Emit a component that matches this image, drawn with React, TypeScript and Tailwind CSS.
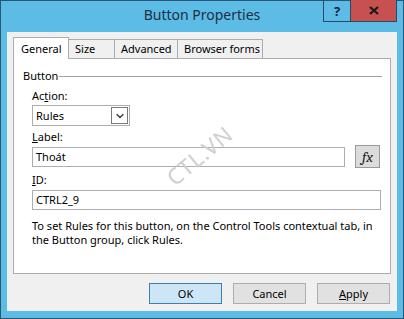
import { ChevronDown } from "lucide-react";

const font = { fontFamily: '"Segoe UI", "Noto Sans", "Open Sans", sans-serif' };

function Tab({ label, width, active }: { label: string; width: string; active?: boolean }) {
  if (active) {
    return (
      <div
        className={`relative z-10 -mb-px flex h-[22px] items-center border border-b-0 border-[#acacac] bg-white pl-[7px] text-black ${width}`}
      >
        {label}
      </div>
    );
  }
  return (
    <div
      className={`-ml-px flex h-[19px] items-center border border-b-0 border-[#acacac] bg-[#f0f0f0] pl-[6px] text-black ${width}`}
    >
      {label}
    </div>
  );
}

function Field({ value, className }: { value: string; className?: string }) {
  return (
    <div className={`flex h-[20px] items-center border border-[#abadb3] bg-white px-[3px] ${className ?? ""}`}>
      {value}
    </div>
  );
}

function DlgButton({ children, primary }: { children: React.ReactNode; primary?: boolean }) {
  return (
    <button
      className={`flex h-[21px] w-[73px] items-center justify-center border ${
        primary ? "border-[#3c7fb1] bg-[#cde6f7]" : "border-[#adadad] bg-[#e1e1e1]"
      } text-black`}
    >
      {children}
    </button>
  );
}

export default function App() {
  return (
    <div
      className="flex h-[319px] w-[404px] flex-col border border-[#2a5674] bg-[#5dbce5] text-[11px] leading-[16px] text-black"
      style={font}
    >
      {/* Title bar */}
      <div className="relative flex h-[31px] shrink-0 items-center justify-center">
        <span className="pb-[3px] text-[14px] text-[#1b2f45]">Button Properties</span>
        <div className="absolute right-[6px] top-[-1px] flex h-[22px] border border-[#2a4a63] border-t-0">
          <div className="flex w-[27px] items-center justify-center border-r border-[#2a4a63] text-[13px] font-bold text-[#10233a]">
            ?
          </div>
          <div className="flex w-[45px] items-center justify-center bg-[#c75050]">
            <svg width="10" height="9" viewBox="0 0 10 9">
              <path d="M1 1 L9 8 M9 1 L1 8" stroke="#1a1a1a" strokeWidth="2.2" />
            </svg>
          </div>
        </div>
      </div>

      {/* Client area */}
      <div className="mx-[6px] mb-[7px] flex flex-1 flex-col bg-[#f0f0f0] px-[6px] pt-[5px]">
        <div className="flex items-end">
          <Tab label="General" width="w-[56px]" active />
          <Tab label="Size" width="w-[47px]" />
          <Tab label="Advanced" width="w-[64px]" />
          <Tab label="Browser forms" width="w-[86px]" />
        </div>

        {/* Tab panel */}
        <div className="relative flex h-[216px] flex-col border border-[#acacac] bg-white pl-[9px] pr-[8px] pt-[9px]">
          <div className="flex items-center">
            <span>Button</span>
            <div className="ml-[1px] h-px flex-1 bg-[#a0a0a0]" />
          </div>

          <div className="ml-[9px] mt-[4px]">
            Ac<span className="underline">t</span>ion:
          </div>
          <div className="ml-[9px] mt-[1px] flex h-[21px] w-[98px] items-center justify-between border border-[#abadb3] bg-white pl-[3px] pr-px">
            <span>Rules</span>
            <div className="flex h-[17px] w-[17px] items-center justify-center border border-[#7a7a7a] bg-white">
              <ChevronDown size={12} strokeWidth={2.5} color="#333" />
            </div>
          </div>

          <div className="ml-[9px] mt-[3px]">
            <span className="underline">L</span>abel:
          </div>
          <div className="ml-[9px] mt-[2px] flex items-start gap-[10px]">
            <Field value="Thoát" className="w-[313px]" />
            <div className="-mt-[2px] flex h-[23px] w-[25px] items-center justify-center border border-[#9a9a9a] bg-[#dcdcdc] font-serif text-[15px] italic text-[#222]">
              fx
            </div>
          </div>

          <div className="ml-[9px] mt-[4px]">
            <span className="underline">I</span>D:
          </div>
          <div className="ml-[9px] mt-[2px]">
            <Field value="CTRL2_9" className="w-[349px]" />
          </div>

          <p className="ml-[9px] mt-[9px] leading-[14px]">
            To set Rules for this button, on the Control Tools contextual tab, in the Button group, click Rules.
          </p>

          {/* watermark */}
          <div className="pointer-events-none absolute left-[146px] top-[88px] -rotate-[40deg] text-[22px] tracking-[1px] text-[#cfcfcf]">
            CTL.VN
          </div>
        </div>

        {/* Buttons */}
        <div className="mt-[9px] flex justify-end gap-[11px] pr-[1px]">
          <DlgButton primary>OK</DlgButton>
          <DlgButton>Cancel</DlgButton>
          <DlgButton>
            <span className="underline">A</span>pply
          </DlgButton>
        </div>
      </div>
    </div>
  );
}
